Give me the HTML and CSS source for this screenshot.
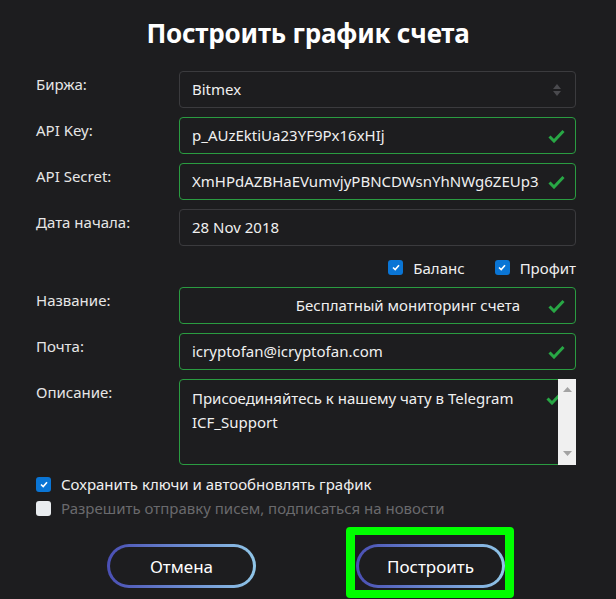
FILE: index.html
```html
<!DOCTYPE html>
<html lang="ru">
<head>
<meta charset="utf-8">
<title>Построить график счета</title>
<link rel="stylesheet" href="styles.css">
</head>
<body>
<div class="page">
  <h1 class="title">Построить график счета</h1>
  <div class="form">
    <div class="row">
      <div class="label">Биржа:</div>
      <div class="field select">
        <span class="value">Bitmex</span>
        <svg class="arrows" width="8" height="14" viewBox="0 0 8 14"><path d="M4 1 L8 6 L0 6 Z M0 8 L8 8 L4 13 Z" fill="#4a4a4e"/></svg>
      </div>
    </div>
    <div class="row">
      <div class="label">API Key:</div>
      <div class="field valid">
        <span class="value">p_AUzEktiUa23YF9Px16xHIj</span>
        <svg class="check" width="17" height="14" viewBox="0 0 17 14"><path d="M1.5 7.5 L6 12 L15.5 2" fill="none" stroke="#28a745" stroke-width="3"/></svg>
      </div>
    </div>
    <div class="row">
      <div class="label">API Secret:</div>
      <div class="field valid">
        <span class="value clip">XmHPdAZBHaEVumvjyPBNCDWsnYhNWg6ZEUp3xk</span>
        <svg class="check" width="17" height="14" viewBox="0 0 17 14"><path d="M1.5 7.5 L6 12 L15.5 2" fill="none" stroke="#28a745" stroke-width="3"/></svg>
      </div>
    </div>
    <div class="row">
      <div class="label">Дата начала:</div>
      <div class="field">
        <span class="value">28 Nov 2018</span>
      </div>
    </div>
    <div class="row checks">
      <div></div>
      <div class="check-group">
        <label class="cb"><span class="box on"><svg width="8" height="7" viewBox="0 0 8 7"><path d="M1 3.5 L3.2 5.6 L7 1.2" fill="none" stroke="#fff" stroke-width="1.6"/></svg></span>Баланс</label>
        <label class="cb"><span class="box on"><svg width="8" height="7" viewBox="0 0 8 7"><path d="M1 3.5 L3.2 5.6 L7 1.2" fill="none" stroke="#fff" stroke-width="1.6"/></svg></span>Профит</label>
      </div>
    </div>
    <div class="row">
      <div class="label">Название:</div>
      <div class="field valid right">
        <span class="value">Бесплатный мониторинг счета</span>
        <svg class="check" width="17" height="14" viewBox="0 0 17 14"><path d="M1.5 7.5 L6 12 L15.5 2" fill="none" stroke="#28a745" stroke-width="3"/></svg>
      </div>
    </div>
    <div class="row">
      <div class="label">Почта:</div>
      <div class="field valid">
        <span class="value">icryptofan@icryptofan.com</span>
        <svg class="check" width="17" height="14" viewBox="0 0 17 14"><path d="M1.5 7.5 L6 12 L15.5 2" fill="none" stroke="#28a745" stroke-width="3"/></svg>
      </div>
    </div>
    <div class="row">
      <div class="label">Описание:</div>
      <div class="field valid area">
        <div class="area-text">Присоединяйтесь к нашему чату в Telegram<br>ICF_Support</div>
        <svg class="check area-check" width="17" height="14" viewBox="0 0 17 14"><path d="M1.5 7.5 L6 12 L15.5 2" fill="none" stroke="#28a745" stroke-width="3"/></svg>
        <div class="scrollbar">
          <svg width="9" height="5" viewBox="0 0 9 5"><path d="M4.5 0 L9 5 L0 5 Z" fill="#a3a3a3"/></svg>
          <svg width="9" height="5" viewBox="0 0 9 5"><path d="M0 0 L9 0 L4.5 5 Z" fill="#a3a3a3"/></svg>
        </div>
      </div>
    </div>
  </div>
  <div class="options">
    <label class="cb"><span class="box on"><svg width="8" height="7" viewBox="0 0 8 7"><path d="M1 3.5 L3.2 5.6 L7 1.2" fill="none" stroke="#fff" stroke-width="1.6"/></svg></span>Сохранить ключи и автообновлять график</label>
    <label class="cb disabled"><span class="box off"></span>Разрешить отправку писем, подписаться на новости</label>
  </div>
  <div class="buttons">
    <div class="btn-wrap"><button class="btn">Отмена</button></div>
    <div class="btn-wrap highlight"><button class="btn">Построить</button></div>
  </div>
</div>
</body>
</html>
```

FILE: styles.css
```css
* { box-sizing: border-box; }
html, body {
  margin: 0;
  padding: 0;
  background: #1d1d1f;
}
body {
  font-family: "Noto Sans", "Open Sans", sans-serif;
  color: #ececec;
  width: 616px;
  height: 599px;
  overflow: hidden;
}
.page {
  padding-top: 14px;
}
.title {
  margin: 0;
  text-align: center;
  font-size: 26px;
  font-weight: 700;
  line-height: 38px;
  color: #ffffff;
  letter-spacing: -0.2px;
}
.form {
  margin-top: 19px;
  display: flex;
  flex-direction: column;
  gap: 9px;
}
.row {
  display: grid;
  grid-template-columns: 179px 397px;
}
.label {
  padding-left: 36px;
  padding-top: 3px;
  font-size: 15px;
  line-height: 20px;
  color: #e6e6e6;
}
.field {
  position: relative;
  height: 37px;
  border: 1px solid #3b3b3e;
  border-radius: 4px;
  display: flex;
  align-items: center;
  padding: 0 12px 1px;
  font-size: 15px;
  color: #f0f0f0;
}
.field.valid {
  border-color: #2a9c41;
}
.field.right {
  justify-content: flex-end;
  padding-right: 55px;
}
.value {
  white-space: nowrap;
}
.value.clip {
  overflow: hidden;
  width: 347px;
  flex: none;
}
.check {
  position: absolute;
  right: 10px;
  top: 11px;
}
.arrows {
  position: absolute;
  right: 14px;
  top: 11px;
}
.checks {
  height: 23px;
}
.check-group {
  display: flex;
  justify-content: flex-end;
  gap: 30px;
  align-items: center;
  padding-top: 2px;
}
.cb {
  display: flex;
  align-items: center;
  gap: 10px;
  font-size: 15px;
  line-height: 20px;
  color: #f0f0f0;
}
.box {
  width: 15px;
  height: 15px;
  border-radius: 3px;
  display: flex;
  align-items: center;
  justify-content: center;
  flex: none;
}
.box.on {
  background: #0a75d5;
}
.box.off {
  background: #e9ecef;
}
.cb.disabled {
  color: #6a6a6d;
}
.field.area {
  height: 86px;
  align-items: flex-start;
  padding: 6px 12px;
}
.area-text {
  line-height: 24px;
  font-size: 15px;
}
.area-check {
  right: 12px;
  top: 11px;
}
.scrollbar {
  position: absolute;
  right: -1px;
  top: -1px;
  bottom: -1px;
  width: 18px;
  background: #f0f0f0;
  display: flex;
  flex-direction: column;
  justify-content: space-between;
  align-items: center;
  padding: 8px 0 9px;
}
.options {
  margin-top: 9px;
  padding-left: 36px;
  display: flex;
  flex-direction: column;
  gap: 4px;
}
.buttons {
  margin-top: 26px;
  display: flex;
  padding-left: 107px;
  gap: 90px;
}
.btn-wrap.highlight {
  border: 9px solid #00ff00;
  border-top-width: 8px;
  border-bottom-width: 8px;
  border-radius: 4px;
  padding: 9px 0 2px 1px;
  margin-top: -17px;
  height: 71px;
}
.btn {
  width: 149px;
  height: 44px;
  border-radius: 22px;
  border: 3px solid transparent;
  background:
    linear-gradient(#1d1d1f, #1d1d1f) padding-box,
    linear-gradient(90deg, #4a4fb4, #6e8fd2 55%, #90c6e8) border-box;
  color: #ffffff;
  font-family: "Noto Sans", "Open Sans", sans-serif;
  font-size: 17px;
  padding: 0;
}
```
